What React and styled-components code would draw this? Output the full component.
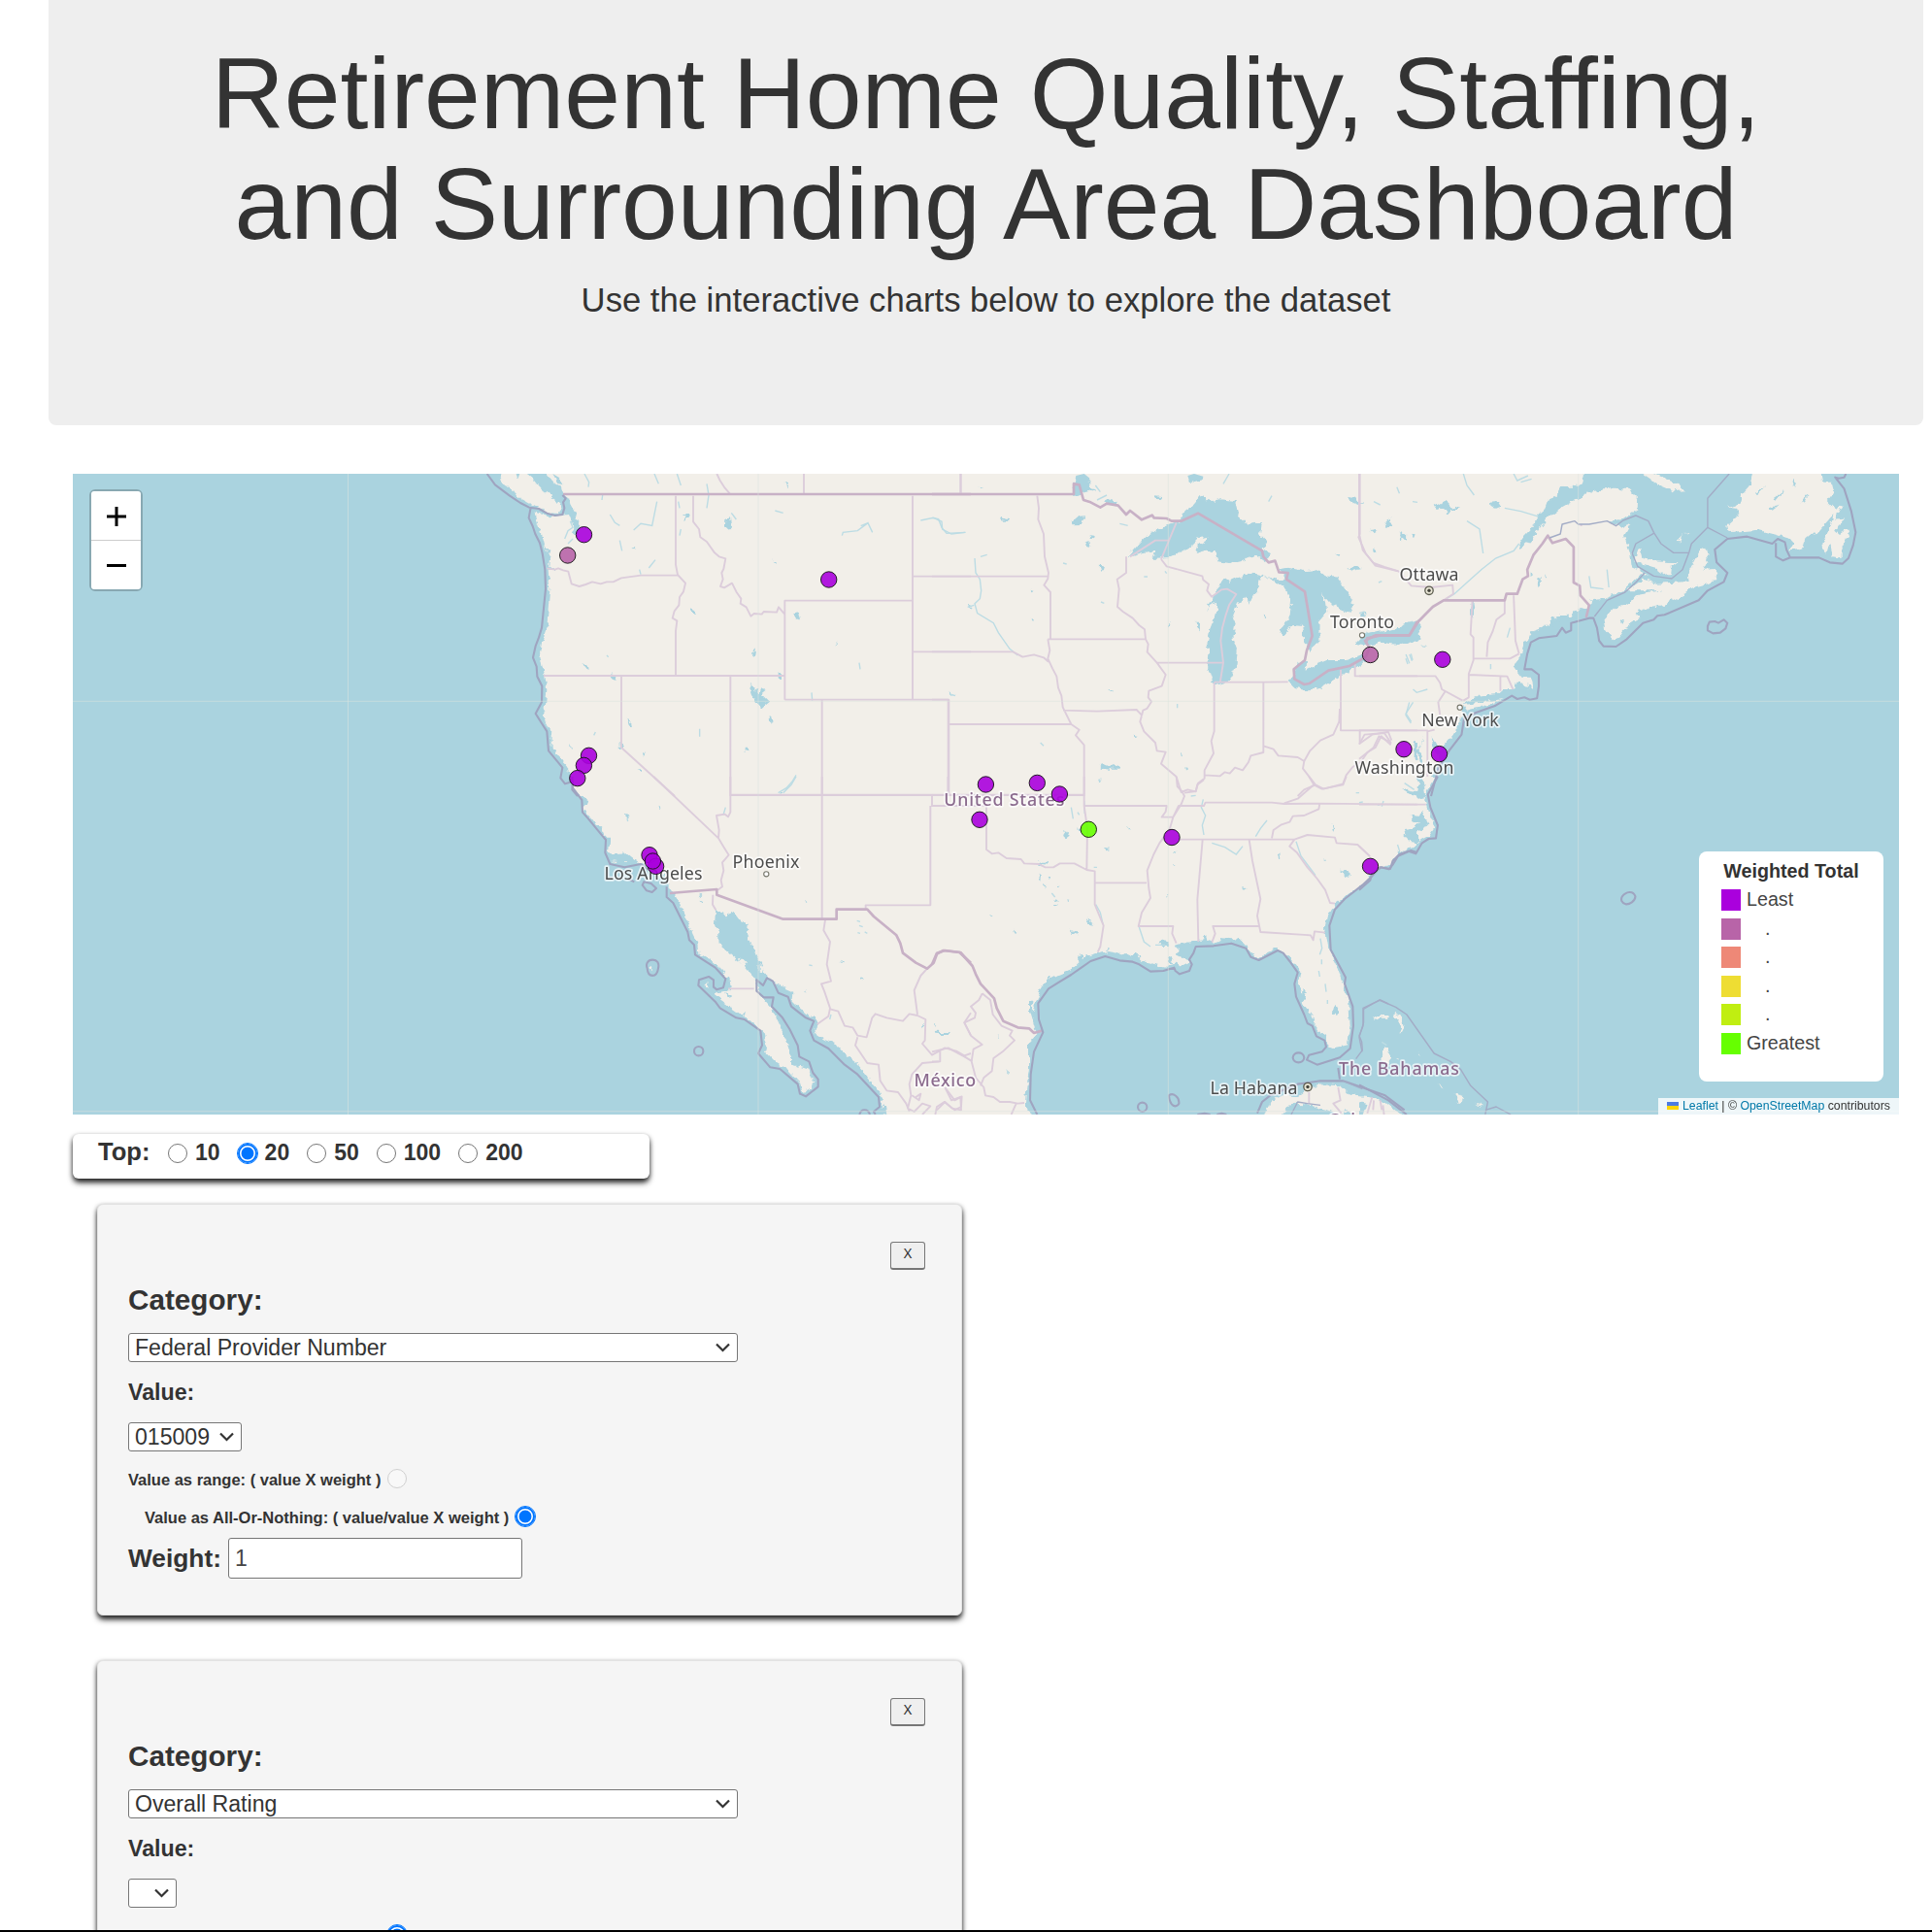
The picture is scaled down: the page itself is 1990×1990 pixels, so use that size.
import React from "react";
import styled, { createGlobalStyle, css } from "styled-components";

const GlobalStyle = createGlobalStyle`
  * { box-sizing: border-box; }
  body {
    margin: 0;
    background: #fff;
    color: #333;
    font-family: "Liberation Sans", Arial, Helvetica, sans-serif;
  }
`;

const Page = styled.div`
  height: 1990px;
  overflow: hidden;
  padding: 0 9px 0 50px;
  border-bottom: 2px solid #000;
`;

const Jumbotron = styled.header`
  height: 438px;
  padding-top: 39px;
  background: #eee;
  border-radius: 0 0 8px 8px;
  text-align: center;
`;

const Title = styled.h1`
  margin: 0;
  font-size: 103.9px;
  font-weight: 400;
  line-height: 114px;
`;

const Lead = styled.p`
  margin: 21px 0 0;
  font-size: 34.65px;
  line-height: 42px;
`;

const Main = styled.main`
  padding: 50px 25px 0 25px;
`;

const MapFrame = styled.section`
  position: relative;
  height: 660px;
  overflow: hidden;
  background: #aad3df;
`;

const MapDrawing = styled.svg`
  display: block;
  width: 100%;
  height: 100%;

  path { vector-effect: non-scaling-stroke; }
  .land { fill: #f2efe9; }
  .water { fill: #aad3df; }
  .river { fill: none; stroke: #bcdce4; stroke-width: 1.4; }
  .state { fill: none; stroke: #dccddb; stroke-width: 1.9; stroke-linejoin: round; }
  .nation { fill: none; stroke: #c8b1c6; stroke-width: 2.7; stroke-linejoin: round; }
  .sea { fill: none; stroke: #9fa4c0; stroke-width: 2.1; stroke-linejoin: round; }
  .seathin { fill: none; stroke: #a3acc6; stroke-width: 1.4; stroke-linejoin: round; }
`;

const PlaceName = styled.text`
  font-family: "Noto Sans", sans-serif;
  font-size: 17.8px;
  fill: ${(p) => (p.$country ? "#8b6b8e" : "#4c4c4c")};
  font-weight: ${(p) => (p.$country ? 500 : 400)};
  stroke: rgba(255, 255, 255, 0.7);
  stroke-width: 3.5px;
  stroke-linejoin: round;
  paint-order: stroke;
`;

const ZoomControl = styled.div`
  position: absolute;
  top: 16px;
  left: 17px;
  width: 55px;
  border: 2.5px solid rgba(0, 0, 0, 0.2);
  border-radius: 6px;
  background-clip: padding-box;
`;

const ZoomButton = styled.button`
  display: flex;
  align-items: center;
  justify-content: center;
  width: 100%;
  height: ${(p) => (p.$first ? 51 : 50)}px;
  padding: ${(p) => (p.$first ? "2px 0 0" : "0")};
  border: 0;
  background: #fff;
  border-radius: ${(p) => (p.$first ? "3px 3px 0 0" : "0 0 3px 3px")};
  ${(p) => p.$first && css`border-bottom: 1px solid #ccc;`}
`;

const Legend = styled.div`
  position: absolute;
  top: 389px;
  right: 16px;
  width: 190px;
  height: 237px;
  padding: 9px 23px 0;
  border-radius: 8px;
  background: #fff;
`;

const LegendTitle = styled.div`
  font-size: 19.7px;
  font-weight: 700;
  line-height: 23px;
  text-align: center;
  white-space: nowrap;
`;

const LegendRow = styled.div`
  display: flex;
  gap: 6px;
  height: 29.6px;
  padding-top: 7px;
  font-size: 19.7px;
  line-height: 21px;
  color: #444;
`;

const Swatch = styled.span`
  flex: none;
  width: 20px;
  height: 22px;
  background: ${(p) => p.$color};
`;

const LegendLabel = styled.span`
  padding-left: ${(p) => (p.$dot ? "19px" : "0")};
`;

const Attribution = styled.div`
  position: absolute;
  right: 0;
  bottom: 0;
  display: flex;
  align-items: center;
  width: 248px;
  height: 17px;
  padding: 0 0 1px 9px;
  background: rgba(255, 255, 255, 0.8);
  font-size: 12.3px;
  white-space: pre;

  svg { margin-right: 4px; }
  a { color: #0078a8; text-decoration: none; }
`;

const shadow = css`
  box-shadow: 0 5px 6px -1px rgba(0, 0, 0, 0.75), 0 2px 5px rgba(0, 0, 0, 0.55);
`;

const TopBar = styled.div`
  display: flex;
  width: 594px;
  height: 46px;
  margin-top: 20px;
  padding-left: 26px;
  border-radius: 6px;
  background: #fff;
  font-weight: 700;
  ${shadow}
`;

const TopLabel = styled.span`
  width: 72px;
  font-size: 25.6px;
  line-height: 37px;
`;

const TopOption = styled.label`
  display: flex;
  gap: 8px;
  height: 39px;
  align-items: center;
  margin-right: 18px;
  font-size: 23px;
  line-height: 36px;

  span { padding-bottom: 2px; }
`;

const Radio = styled.input.attrs({ type: "radio", readOnly: true })`
  appearance: none;
  flex: none;
  width: 20px;
  height: 20px;
  margin: 0;
  border: 1.5px solid #767676;
  border-radius: 50%;
  background: #fff;

  &:disabled {
    border-color: #d0d0d0;
    background: #f8f8f8;
  }

  &:checked {
    outline: 0.5px solid #0075ff;
    border: 2px solid #0075ff;
    background: radial-gradient(circle, #0075ff 6px, #fff 6.8px);
  }
`;

const Cards = styled.div`
  display: flex;
  flex-direction: column;
  gap: 46px;
  width: 891px;
  margin: 26px 0 0 25px;
`;

const Card = styled.section`
  flex: none;
  height: 424px;
  padding: 38px 37px 0 31px;
  border: 1px solid #e3e3e3;
  border-radius: 6px;
  background: #f5f5f5;
  ${shadow}
`;

const CloseButton = styled.button`
  display: block;
  width: 36px;
  height: 29px;
  margin-left: auto;
  padding: 0 0 5px;
  border: 1.5px solid #767676;
  border-bottom-width: 2px;
  border-radius: 3px;
  background: #efefef;
  color: #333;
  font: 14.5px "Noto Sans", sans-serif;
  line-height: 19px;
`;

const CategoryLabel = styled.div`
  margin-top: 14px;
  font-size: 29.7px;
  font-weight: 700;
  line-height: 34px;
`;

const ValueLabel = styled.div`
  margin-top: 17px;
  font-size: 23.2px;
  font-weight: 700;
  line-height: 28px;
`;

const SelectBox = styled.div`
  display: flex;
  align-items: center;
  justify-content: space-between;
  width: ${(p) => p.$width}px;
  height: 30px;
  margin-top: ${(p) => p.$top}px;
  padding: 0 7px 0 6px;
  border: 1.3px solid #767676;
  border-radius: 3px;
  background: #fff;
  font-size: 23.1px;
  line-height: 28px;
`;

const ModeRow = styled.label`
  display: flex;
  align-items: center;
  gap: 7px;
  height: 20px;
  margin: ${(p) => (p.$indent ? "19px 0 0 17px" : "18px 0 0")};
  font-size: 16.5px;
  font-weight: 700;

  span { padding-top: 3px; }
`;

const WeightRow = styled.label`
  display: flex;
  align-items: center;
  gap: 7px;
  margin-top: 12px;
  font-size: 26.3px;
  font-weight: 700;
`;

const WeightInput = styled.input`
  width: 303px;
  height: 42px;
  padding: 0 6px;
  border: 1.3px solid #767676;
  border-radius: 3px;
  background: #fff;
  color: #444;
  font: 23px "Liberation Sans", sans-serif;
`;

/* Each sheet of the map is digitised on its own grid and placed by its transform. */
const SHEETS = [
  {
    at: "translate(500 480) scale(.33333)",
    land: [
      "M190 24L205 48 232 62 240 85 258 98 262 118 280 150 292 185 285 215 272 205 270 180 258 150 240 152 200 156 155 140 160 178 172 210 182 250 198 290 194 320 199 380 194 440 190 500 176 540 168 580 175 620 184 650 190 690 186 740 175 770 192 800 206 830 206 870 232 905 256 935 262 960 272 975 275 1000 310 1030H1500V24Z",
      "M50 24L45 42 60 60 85 72 100 95 132 115 160 128 200 145 228 148 236 128 220 108 195 88 170 66 150 42 128 24Z",
    ],
    water: [
      "M820 672L830 690 845 700 850 688 866 692 852 704 876 728 850 750 838 730 822 708 814 684Z",
      "M742 165L756 160 760 185 750 197 740 190ZM612 146L632 150 628 165 612 170 620 158ZM388 640L403 645 400 660 390 658ZM436 782L450 792 454 810 442 800ZM412 852L426 858 424 876 414 874ZM952 460L964 450 972 472 956 468ZM878 770L888 780 880 798ZM302 606L316 616 320 630 306 622ZM905 640L915 645 912 660 905 655ZM800 872L812 872 810 882 800 880ZM822 580L834 568 830 588ZM470 940L482 940 478 950ZM488 888L497 892 492 900ZM452 250L463 250 460 257ZM636 442L646 446 642 456ZM258 862L270 872 262 876ZM925 50L936 56 930 64ZM888 286L900 300 896 304ZM1084 544L1092 548 1086 552ZM1490 430L1500 434 1494 440Z",
      "M186 250L200 258 196 270 204 280 192 292ZM190 310L212 310 210 320 192 320ZM240 950L262 955 270 985 262 975 245 970Z",
      "M95 24L100 40 106 24ZM208 24L228 36 240 58 226 55Z",
    ],
    river: "M245 225L255 200 270 190 262 170M255 240L270 225M522 24L535 55M592 24L604 60M684 55L690 90 684 130M306 24L320 50 318 65M458 198L480 178 515 184 530 110M385 150L400 175 415 184M600 130L596 110M600 215L604 195M1102 215L1105 205 1150 200 1182 176 1196 205M1182 176L1160 185M1345 168L1385 160 1410 172 1412 195 1440 210 1482 205M760 145L775 165M895 138L920 145M362 90L360 105M476 320L480 335M905 1010L930 995 948 975 960 955M1435 705L1452 710M1155 608L1158 628M662 812L662 836M375 585L380 590M1008 700L1010 725M415 230L422 262M505 315L525 290M340 822L335 832",
    nation: "M240 87H1500",
    state: "M588 92V305L594 336 618 362 612 388 600 405 598 430 584 448 578 470 592 478 588 510V648M190 316L215 320 225 316 240 322 256 326 266 364 290 372 310 366 330 358 356 364 375 358 395 358 420 346 480 338H594M642 92V172L660 195 664 220 684 234 708 268 722 280 742 286 736 318 730 330 734 350 726 372 738 376 762 362 776 390 790 410 788 425 806 436 820 464 830 456 854 458 860 450 900 452 906 436 924 457M925 722V416H1320M925 722H1430V1020M1320 92V722M180 648H925M420 648V870L585 1020M757 648V1020M757 1017H1500M1040 722V1020M1320 341H1500M1320 574H1500M1430 798H1500M715 24L725 45 740 68 755 85M984 24V85M1468 24V85",
    sea: "M5 24L30 58 75 92 108 114 135 128 165 132 190 146 215 153 238 150 244 130 240 112 248 100 238 90M140 128L134 160 146 186 154 210 168 238 176 270 184 320 186 380 180 440 174 500 165 530 155 556 147 592 158 620 160 650 175 680 174 730 155 765 172 792 190 820 195 880 220 910 238 932 232 964 246 982 270 975 268 1000 285 1020",
  },
  {
    at: "translate(960 480) scale(.33333)",
    land: ["M0 24H1500V1040H0Z"],
    water: [
      "M605 280L640 240 662 215 700 195 740 178 765 168 780 140 808 120 835 88 850 105 870 108 890 103 935 108 948 155 975 180 1020 174 1014 210 1035 235 1022 255 1048 268 1032 296 1000 274 960 290 918 300 885 295 872 265 850 260 815 270 828 238 858 218 825 222 805 242 775 262 735 282 680 285 690 262 650 268Z",
      "M845 452L866 410 880 380 905 346 920 356 955 340 985 328 1025 340 1012 356 1008 385 992 402 978 432 974 402 945 425 930 460 938 485 928 530 944 572 940 620 915 665 880 677 864 658 852 620 856 580 850 550 860 500 872 470 880 425 860 430Z",
      "M1025 340L1060 352 1095 350 1070 318 1100 314 1150 324 1195 322 1215 340 1252 344 1285 390 1305 430 1290 438 1296 456 1262 442 1230 424 1200 390 1218 420 1222 450 1196 480 1195 545 1165 572 1150 545 1144 495 1115 492 1085 525 1073 505 1105 470 1110 420 1092 380 1060 358Z",
      "M1100 665L1116 645 1130 605 1155 605 1154 632 1190 612 1220 600 1280 600 1330 582 1348 600 1300 628 1258 650 1200 686 1160 695 1120 686Z",
      "M438 60L445 30 470 24 490 40 485 65 508 70 485 78 462 84 450 96 434 88ZM790 30L810 24 838 32 836 46 812 52 795 46ZM434 172L452 155 475 154 462 170 458 180 436 181ZM515 308L534 310 530 324 520 326ZM470 235L488 232 490 248 476 246ZM485 214L500 216 498 226 488 224ZM815 482L826 482 824 508 816 500ZM210 158L238 166 236 172 212 168ZM1285 96L1305 98 1315 112 1334 112 1314 120 1290 110ZM1285 314L1310 306 1328 318 1305 323ZM545 96L550 105 575 110 570 125 535 110ZM692 94L712 96 710 103 692 102ZM1150 512L1160 500ZM1360 200L1375 198 1370 208ZM1442 205L1452 220 1448 234ZM1398 172L1410 170 1408 190ZM1246 270L1258 274 1254 280ZM540 688L562 693 556 698ZM52 700L74 706 60 710ZM1490 850L1500 850V905L1490 900ZM1320 455L1338 450 1340 468 1322 470Z",
      "M768 885L776 892 770 900ZM730 480L736 490 730 505ZM622 830L636 834 626 838ZM515 925L530 920 552 930 580 925 578 938 552 938 525 935ZM514 968L525 968 520 978ZM1022 463L1030 470 1024 472ZM146 62L155 65 148 68ZM306 380L318 384 310 388ZM308 470L315 476 310 482ZM784 934L792 936 786 944Z",
    ],
    river: "M0 160L20 164 30 190 45 208 104 205M132 285L135 330 148 350 152 385 148 410 132 425 140 455 190 485 205 515 240 565 265 585M110 436L130 430M150 280L170 274M505 60L520 80M900 55L918 24M1040 110L1050 92M580 178L605 184M510 105L540 90M335 855L345 865M720 325L725 332M655 342L666 342M405 300L416 303M522 420L532 424M1464 595L1470 612M1480 580L1485 600M1475 730L1464 770 1480 795M1490 1000L1460 980M1365 110L1385 120M1485 110L1500 112M1380 360L1390 356M758 735L758 748",
    nation: "M0 87H438V55L455 58 468 105 490 112 520 128 540 116 575 122 600 150 612 138 648 166 680 152 686 160 725 162 740 170H770L822 146 1020 262 1024 280 1040 298 1060 293 1072 328 1100 330 1095 350 1152 388 1175 525 1158 570 1152 600 1118 628 1120 658 1150 675 1166 672 1225 632 1290 618 1340 590 1352 562 1338 540 1370 523H1475L1500 480",
    state: "M89 24V85M325 92L330 130 328 165 345 210 348 280 360 330 358 348 346 368 366 390V535M0 341H360M0 574H250L280 590 315 583 345 592 360 605M358 535H660M358 535L364 570 358 595 372 625 385 650 390 685 400 710 404 745 430 798 455 815 444 832 470 862V1020M52 798H430M0 722H52V1015M0 1017H470M405 755L510 758 632 753 650 772M600 280V330L572 350 578 380 573 435 590 450 620 470 640 492 657 505 660 535 668 550 665 575 695 608 722 645 710 680 670 695 668 715 678 728 664 750 652 755 643 790 655 820 690 855 695 880 722 884 708 920 755 960 770 1008 790 1000 815 1006 822 980 842 965 842 940 870 888 863 850 872 820V668M695 608H897M872 668H1024L1100 667M1024 670V885L985 895 978 915 960 940 936 932 920 950 905 946 890 958 842 955M1024 865L1055 875 1070 895 1130 900 1150 912 1168 880 1200 848 1240 830 1258 790 1260 750M1150 912L1146 935 1185 985 1210 998 1270 982 1280 955 1300 930 1325 915 1345 885 1370 870 1388 835 1418 862M1185 985L1150 1000 1130 1020M1263 630V817H1500M1322 817V857L1360 830 1410 822 1420 848M1307 610V649H1500M708 288L725 310 780 325 835 340 838 352 855 365 850 385 864 404 895 382 912 380 940 396 918 430 908 460 897 500 892 540 900 608 890 670M612 280L690 230H732M755 175L708 288M1322 24V210L1318 220 1340 270 1370 308 1440 325",
  },
  {
    at: "translate(1400 480) scale(.37 .33333)",
    land: [
      "M0 24H624L620 48 600 65 560 66 545 95 525 105 515 135 500 150 482 190 460 215 445 240 450 255 478 232 500 195 525 162 560 130 610 98 650 78 710 68 750 72 776 98 775 135 735 165 690 170 728 190 755 180 738 215 755 270 758 310 800 330 770 350 735 385 680 408 645 412 640 440 610 435 590 465 545 465 520 495 500 505 480 512 470 540 458 545 450 590 430 620 450 650 478 650 484 682 460 690 455 672 440 662 425 690 400 690 385 705 330 710 300 728 285 745 290 765 280 790 262 830 238 860 224 878 210 850 202 835 205 870 218 890 222 915 210 940 195 970 178 1040H0Z",
      "M290 738L330 732 400 720 370 735 300 755Z",
      "M745 385L790 350 830 362 905 358 918 350 915 330 935 290 950 258 965 250 972 290 958 320 990 318 998 335 980 360 930 375 900 400 845 430 800 440 775 450 782 470 745 495 725 530 708 535 685 510 680 475 715 435 750 425 770 400 845 385Z",
      "M775 262L785 254 790 285 815 295 888 298 870 312 868 332 850 336 830 318 790 305 766 290Z",
      "M1095 24L1085 65 1065 90 1058 118 1030 128 1052 132 1060 148 1025 182 1028 204 1110 198 1160 212 1200 225 1210 240 1195 262 1228 258 1245 225 1272 200 1268 215 1300 175 1320 150 1312 190 1290 240 1296 272 1312 240 1318 280 1345 285 1345 240 1365 205 1362 190 1335 210 1325 200 1348 160 1325 165 1345 120 1322 132 1302 108 1322 80 1315 50 1290 50 1285 24Z",
      "M790 24L830 55 880 78 906 76 895 60 850 38 818 24Z",
      "M888 235L894 220 900 210 896 234ZM906 208L920 203 916 208Z",
    ],
    water: [
      "M-13 552L5 530 20 518 70 510 112 500 125 485 175 472 165 500 172 530 135 552 90 550 60 545 20 556Z",
      "M310 425L320 415 322 440 314 470 308 455ZM365 110L385 108 394 125 380 132 366 122ZM210 125L240 105 255 125 280 135 255 135 245 150 235 130 215 135ZM495 350L504 345 506 370 498 378ZM725 475L738 478 730 485ZM112 205L130 208 130 230 116 220ZM145 210L158 210 155 228ZM172 558L190 556 182 560ZM480 325L486 335 480 338ZM514 338L520 340 516 344ZM180 830L170 860 160 880 174 920 178 900 166 880 172 850ZM30 200L48 200 38 208ZM85 160L90 185 75 188ZM35 255L48 262 38 270Z",
      "M455 675L475 678 480 690 468 686 462 700 450 695ZM540 465L548 480 542 495 535 475ZM575 455L584 470 578 485ZM560 458L564 480 556 490Z",
      "M1100 80L1135 60 1105 88ZM1150 100L1185 72 1160 104ZM1210 40L1215 70 1206 55ZM1140 130L1170 122 1150 140ZM1230 110L1250 90 1240 118Z",
    ],
    river: "M445 240L430 262 380 285 340 320 300 360 265 395 240 412M405 130L450 140 495 155M300 170L335 195 345 270M290 24L300 60 320 90M430 24L440 45 470 30M450 50L480 40M0 455L15 450M130 582L140 610M140 582L147 602M366 612L366 628M640 340L645 375 680 380M690 320L695 375M150 690L160 700 190 690M150 730L130 765 145 790M412 530L420 500M105 65L112 85",
    nation: "M20 545L22 532 60 523H140L165 480 205 435 235 415H405L410 395 440 395 455 350 470 340 468 320 485 275 510 240 525 215 538 238 575 225 597 250V360L614 370 616 400 640 430 632 468",
    state: "M0 24V210L10 260 40 300 70 312 110 325 145 370 200 375 260 368 262 395 235 415M315 418L310 520 318 530V600L305 642V715L290 725M405 415L405 455 382 475 372 510 358 545 355 590M430 400L435 540 445 580M318 595H420L445 580M305 645L412 650 428 690M393 650V695M0 649H212L225 670 230 690 288 725M240 695L220 730 225 770M0 817H190V960M190 820L210 815M0 860L15 830 70 825 88 855 55 835 40 870 0 905M618 180V186",
    sea: "M200 1020L212 970 222 930 250 880 285 830 292 780 325 762 380 740 425 710 440 720 460 715 475 722 495 718 500 680 500 645 480 628 460 628 468 580 478 545 500 532 550 525 565 500 575 515 590 508 590 485 640 470H652L662 500 668 540 680 557 715 558 745 535 790 485 820 475 830 463 850 460 945 415 970 385 1015 358 1025 330 995 298 990 258 1025 225 1080 218 1150 240 1165 225 1185 235 1190 260 1200 283 1280 283 1310 298 1345 302 1362 285 1375 245 1382 205 1370 140 1350 70 1325 35 1335 38 1350 35 1355 24M1160 238L1160 280 1180 292 1200 283M970 495L975 482 990 480 1000 485 1015 475 1025 485 1020 502 1005 515 985 517 970 508Z",
    seathin: "M1030 24L970 100V190L1025 222M970 190L925 240 918 268H875L840 240 820 205 805 170 770 153 735 168 715 185 690 170 640 180 610 180 600 170 565 180 560 210 530 222M820 208L770 240 760 270 775 310 820 340 870 348 900 320 918 268M795 330L770 360 740 390 690 415 655 465",
  },
  {
    at: "translate(500 800) scale(.33333)",
    land: [
      "M270 0L272 30 296 50 298 62 318 62 314 82 300 95 335 140 368 170 370 185 384 185 378 230 390 238 435 235 470 262 520 290 556 308 568 340 582 360 602 395 612 420 625 445 640 485 655 515 658 545 690 562 730 595 752 625 755 660 705 670 740 700 790 735 840 770 865 795 866 850 900 885 940 910 972 945 980 974 995 972 1015 945 1000 905 968 895 945 860 928 810 900 750 880 710 850 675 832 620 790 575 758 548 722 515 720 480 708 450 712 410 745 430 765 420 780 440 812 455 810 485 828 530 848 575 862 605 900 642 952 665 950 695 1000 740 1015 738 1026 760 1018 790 1050 812 1080 825 1100 850 1150 888 1190 940 1220 975 1230 1044H1500V0Z",
      "M683 632L690 640 692 655 684 650ZM512 582L520 584 518 598 512 592ZM390 262L410 264 405 268ZM420 262L445 262 430 266Z",
      "M785 558L802 575 808 590 792 584ZM845 582L858 590 855 604 845 602Z",
    ],
    water: [
      "M955 862L968 870 965 895 945 890 945 868Z",
      "M428 116L446 120 440 128ZM530 92L542 96 536 102ZM1388 788L1432 790 1430 795 1390 793ZM658 362L668 366 662 370ZM664 380L676 384 670 388ZM988 384L996 386 990 390ZM905 48L920 50 908 56ZM798 725L806 735 800 745ZM740 670L762 674 752 680ZM990 656L994 668 988 664ZM1102 566L1110 572 1104 576ZM1160 618L1170 622 1162 626ZM1390 760L1396 765 1390 770ZM1350 765L1358 770 1352 775ZM1228 684L1242 688Z",
      "M1224 1040L1235 1010 1240 1044Z",
    ],
    river: "M735 118L742 95M438 128L440 138M920 50L945 25 960 0M1148 445L1158 448M1155 460L1166 464M1150 482L1158 484M1172 480L1180 484M1000 582L1010 584M1068 735L1064 750",
    nation: "M570 360L640 354 715 348V365L920 440H1085V410H1180L1200 432 1240 465 1270 490 1282 515 1290 545 1330 575 1365 593 1385 575 1395 548 1415 537 1465 543 1500 575",
    state: "M520 0L720 190 722 165 714 120 740 116 750 124 757 110V0M720 190L735 215 752 242 732 265 736 290 728 320 732 340 718 350M757 56H1380V90H1425M1040 0V440M1375 90V397H1175V410M1430 0V56M703 365L702 395 712 412M1050 442L1045 475 1065 510 1055 580 1068 632 1038 640 1048 665 1065 715 1060 740 1025 765M1065 718L1090 725 1110 770 1135 775 1150 800 1178 805 1195 745 1205 733 1240 745 1290 755 1310 733 1335 738 1360 750 1358 815 1350 825 1380 860 1420 838 1455 848 1480 862 1500 855M1335 735L1325 660 1345 615 1365 593M1150 805L1143 830 1180 885 1215 890 1220 940 1240 970 1275 975 1300 1010 1310 1035M750 655H830M1405 850V880L1350 885 1318 920 1310 950 1315 985 1305 1025 1325 1035 1350 1010 1375 1018 1350 1044M1318 985L1340 1000 1345 980 1330 990M1390 1044L1395 1020 1418 1005 1450 1030 1470 1020 1472 988 1450 1000 1420 960M1500 730L1480 760 1500 800",
    sea: "M268 0L270 35 298 72 300 110 318 130 355 175 372 195 370 235 385 270 430 280 480 270 520 300M485 335L490 325 512 330 528 345 515 357 498 352ZM440 315L460 325M560 340V372L580 390 600 430 625 480 630 505 645 520 648 550 710 590 742 625 735 652 715 658 705 650 705 628 690 618 660 628 658 645 710 695 725 715 775 745 800 750 850 785 855 830 843 855 880 898 910 903 965 950 972 980 990 988 1028 958 1028 935 1012 915 1000 880 970 865 965 830 940 780 918 745 885 710 890 682 860 682 838 662 838 628 858 645 870 622 888 632 905 668 935 680 945 710 990 745 1015 755 1003 785 1015 815 1060 840 1110 890 1150 920 1215 990 1218 1020 1200 1035 1205 1044M517 566C500 566 495 580 500 592C502 622 530 622 534 592C538 575 530 566 517 566ZM645 848a14 14 0 1 0 28 0a14 14 0 1 0 -28 0M1156 1044C1160 1025 1182 1025 1188 1044",
  },
  {
    at: "translate(960 800) scale(.33333)",
    land: [
      "M0 0H1500V210L1470 222 1440 235 1418 272 1380 282 1355 300 1340 330 1290 360 1250 390 1225 425 1215 470 1225 530 1250 585 1270 640 1288 700 1292 770 1280 830 1240 838 1222 830 1218 800 1190 780 1175 740 1145 700 1155 665 1140 670 1130 645 1138 600 1105 560 1070 528 1025 548 1005 560 980 535 950 500 900 502 870 512 840 505 800 510 755 518 748 530 765 530 755 550 785 565 800 570 770 585 755 575 725 588 700 582 650 570 600 550 545 540 500 548 465 560 430 595 390 612 355 630 335 660 320 700 305 730 320 780 325 795 300 822 300 900 290 980 288 1010 305 1044H0Z",
      "M1030 1044L1045 1000 1090 985 1130 988 1160 965 1200 952 1260 955 1290 985 1350 990 1400 1005 1430 1030 1450 1044H1300L1280 1030 1260 1044 1220 1030 1150 1012 1110 1010 1080 1044Z",
      "M1398 838L1405 838 1418 870 1400 882 1390 878ZM1365 745L1375 738 1410 738 1412 745 1385 745 1372 752ZM1430 732L1452 750 1458 770 1450 790 1445 760ZM1438 870L1446 872 1444 878Z",
    ],
    water: [
      "M700 514L715 505 735 508 730 525 712 524ZM1238 712L1250 708 1258 722 1248 738 1236 728ZM838 490L846 485 850 508 838 510ZM890 495L945 500 945 512 895 510ZM452 548L466 545 462 575 450 565ZM300 700L310 690 308 735 300 725ZM355 615L365 612 362 640 352 635ZM608 548L630 545 640 560 655 575 640 580 620 565ZM725 560L740 555 748 578 738 580ZM540 528L545 530 542 542ZM1455 190L1480 165 1500 150V205L1470 200 1490 190ZM1475 120L1500 122 1492 130 1500 138 1485 140ZM430 470L442 475 448 488 436 485ZM475 435L490 448 502 458 485 455ZM405 162L418 170 425 182 415 190ZM450 165L460 160 458 172ZM330 262L345 270 360 262 358 275 332 272ZM1258 285L1275 292 1295 300 1290 312 1272 300ZM1205 257L1225 257 1212 261ZM232 905L240 904 238 920 232 918ZM8 789L55 790 45 795 10 794Z",
      "M372 396L388 398 375 404ZM382 374L390 382 384 384ZM418 380L424 388 420 390ZM530 218L550 222 538 226ZM596 154L616 158 605 160ZM740 232L758 230 748 236ZM744 270L755 272 748 276ZM726 362L734 368 728 374ZM958 342L968 346 960 350ZM1235 148L1244 156 1240 168ZM1065 245L1078 238 1070 250ZM180 424L188 428 182 430ZM330 300L336 305 334 320 328 312ZM345 330L352 335 348 345ZM358 305L366 312 362 318ZM390 335L396 340 390 345ZM252 470L262 476 256 482ZM204 800L210 804 206 808Z",
      "M1145 655L1158 665 1148 675 1155 690 1142 685Z",
    ],
    river: "M838 70L832 95 845 120 835 150 840 180M865 205L905 218 940 240 960 215M1125 200L1140 245 1170 285 1185 305M1200 500L1205 530 1198 550M1204 565L1204 580M1195 600L1198 618M1215 640L1218 665M1222 690L1222 702M1000 185L1015 160 1035 135M370 360L380 372M640 465L655 510 675 525M506 395L520 420 528 455M515 8L520 16M800 60L815 58M1310 50L1320 50M1395 75L1390 92M470 75L472 115M430 95L436 130M450 110L455 118M500 280L510 280M720 520L690 520M1390 820L1405 830",
    nation: "M0 580L15 545 40 537 88 543 125 585 135 610 150 640 192 685 200 715 220 755 265 775 300 778 315 792 340 785",
    state: "M0 56H470M470 0V90H725L722 108 710 125H745L762 90H840L845 80 1050 80 1088 84 1195 83 1500 86M470 90L480 160 478 288 503 292V395L530 460 520 525 512 542M0 90H168V225L185 238 205 235 230 252 275 255 285 268 330 270 350 280 375 280 395 268 440 268 478 288M503 328H663M755 0L758 30 772 45 780 60 770 85 745 125 735 160 725 175 703 205 685 240 665 290 670 345 675 375 648 420 638 462H745L742 485 755 515M780 50L815 45 820 25 840 10M760 194H1120L1105 215 1128 235 1160 280 1190 315 1215 350 1230 390 1245 392M836 195L820 380 823 510M980 195L990 260 1015 378 1005 430 1015 480 1170 490 1178 505 1182 478 1215 482M865 512L875 485 868 462H1010M1120 194L1160 180 1245 188 1250 205 1315 210 1352 245M1050 190L1055 165 1080 148 1105 140 1115 122 1150 120 1195 100 1198 83M1088 82L1130 68 1180 25 1165 0M1180 25L1205 38 1270 25 1280 0M50 0V56M155 670L145 690 120 710 135 730 132 745 100 760 120 800 155 828 128 842 122 880 135 930 160 960 165 985 190 990 210 1005 240 1005 265 1010 285 1008M155 670L180 690 188 735 215 770 248 785 240 800 255 815 218 850 190 870 185 910 160 930 150 955M0 850L50 838 100 865 125 880M0 880L22 880M40 960L60 1000 88 990 90 1030 62 1025 40 1005 15 1030M260 1010L245 1044M1165 975V1010M1255 960L1262 1000 1240 1010 1265 1040M1360 990L1345 1040M1385 1000L1390 1030",
    sea: "M1500 235L1480 228 1440 245 1425 270 1412 286 1385 280 1357 310 1330 335 1275 378 1245 410 1228 460 1232 535 1278 620 1275 640 1300 710 1302 770 1292 840 1260 868 1190 890 1158 875 1165 860 1205 850 1218 835 1213 815 1188 802 1175 770 1160 762 1150 735 1125 680 1120 640 1130 605 1105 570 1085 545 1068 537 1010 567 985 557 970 530 925 515 870 523 815 525 808 545 795 565 803 580 795 600 765 610 752 600 748 590 715 600 675 602 640 580 620 572 580 568 535 555 490 570 430 612 360 655 328 700 330 750 343 790 315 850 305 920 303 1000 325 1044M1005 1040L1020 1005 1045 985 1130 950 1200 940 1270 940 1400 985 1460 1030M1260 935L1255 900M1115 868C1117 848 1148 848 1150 868C1148 888 1117 888 1115 868ZM636 1021a14 14 0 1 0 28 0a14 14 0 1 0 -28 0M732 985C745 975 765 990 763 1010C755 1025 735 1020 732 985ZM820 1044L842 1040 860 1044M880 1044L895 1040 910 1044",
    seathin: "M1310 872L1330 845 1328 820 1320 800 1332 770V715L1385 690 1410 702M1110 1044L1130 1005 1160 1010 1200 1015M1270 940L1330 965",
  },
  {
    at: "translate(1400 800) scale(.37628 .33333)",
    land: [
      "M0 0H210L190 40 178 70 188 105 208 155 190 185 150 210 110 222 85 268 55 275 30 302 0 335Z",
      "M0 990L20 990 60 1010 90 1044H0Z",
      "M70 834L78 838 90 870 74 890 62 870ZM38 745L58 738 82 740 80 746 55 746 42 752ZM98 728L118 745 124 770 114 792 110 760 95 742ZM160 850L168 862 164 862ZM262 982L284 990 280 1002 266 1012 272 995ZM320 1008L340 1012 332 1016ZM200 905L206 918 202 916ZM215 940L230 965 224 960Z",
    ],
    water: [
      "M110 30L140 42 160 45 165 20 155 0 170 0 178 30 182 60 160 65 135 50ZM140 120L165 122 170 105 180 130 188 145 178 160 158 170 150 185 165 190 145 198 130 192 122 165 140 162 165 145 145 135Z",
      "M0 1005L20 1010 10 1044H0Z",
    ],
    river: "M0 80L10 78M50 88L60 85M105 210L110 228",
    state: "M0 86H183M0 215L30 247M40 1000L38 1030M65 1015L68 1044",
    sea: "M215 0L205 20 188 55 195 95 215 150 210 190 190 192 172 205 155 238 135 230 110 240 92 260 85 285 60 280 35 300 30 320 0 350M720 370C730 355 750 350 756 370C755 385 740 395 730 394C718 390 715 380 720 370ZM0 952L80 1000 130 1044",
    seathin: "M8 850L0 805 12 760V718L55 690 100 712 130 735 205 855 250 880 278 905 305 955 352 1005 345 1044M345 1030L375 1020 415 1044",
  },
];

const MARKERS = [
  [601.5, 550.7], [584.7, 572, "#b864a8"], [853.7, 597], [606.5, 778.3], [601.4, 788.4],
  [594.8, 801.6], [669, 880.7], [675.6, 892.3], [672.4, 887], [1015.4, 808], [1068.3, 806.4],
  [1091.4, 818], [1009, 844.3], [1121.3, 854.3, "#6f0"], [1207, 862.5], [1411.5, 892.3],
  [1411.5, 674.5, "#b864a8"], [1485.8, 679.3], [1446, 771.7], [1482.5, 776.6],
];

const PLACES = [
  ["Ottawa", 1441.5, 597.7, 61], ["Toronto", 1370, 647.3, 66], ["New York", 1464.3, 747.7, 79.5],
  ["Washington", 1395.5, 796.7, 102], ["Los Angeles", 622.5, 906.2, 101], ["Phoenix", 754.5, 893.5, 69],
  ["La Habana", 1246.5, 1127.2, 90], ["United States", 972.3, 829.7, 124, true],
  ["México", 941.5, 1118.7, 63.5, true], ["The Bahamas", 1379, 1106.8, 124, true],
  ["Cuba", 1368, 1160, 45, true],
];

const TOWNS = [[1403, 654.3], [1503.7, 728.7], [789.3, 900.3]];
const CAPITALS = [[1472, 608.3], [1347, 1119.5]];

const LINES = ["river", "state", "nation", "sea", "seathin"];

function Terrain() {
  return (
    <>
      {SHEETS.map((s) => (
        <g key={s.at} transform={s.at}>
          {s.land.map((d) => <path key={d} className="land" d={d} />)}
        </g>
      ))}
      {SHEETS.map((s) => (
        <g key={s.at} transform={s.at}>
          {s.water.map((d) => <path key={d} className="water" d={d} />)}
        </g>
      ))}
    </>
  );
}

function UsMap() {
  return (
    <MapDrawing viewBox="75 488 1881 660" preserveAspectRatio="none">
      <defs>
        <filter id="shore" filterUnits="userSpaceOnUse" x="75" y="488" width="1881" height="660" colorInterpolationFilters="sRGB">
          <feTurbulence type="fractalNoise" baseFrequency=".16" numOctaves="2" seed="4" />
          <feDisplacementMap in="SourceGraphic" scale="7" xChannelSelector="R" yChannelSelector="G" />
        </filter>
        <clipPath id="rim"><path d="M75 488H1956V492H75ZM75 1144H1956V1148H75Z" /></clipPath>
      </defs>
      <g filter="url(#shore)"><Terrain /></g>
      <g clipPath="url(#rim)"><Terrain /></g>
      {SHEETS.map((s) => (
        <g key={s.at} transform={s.at}>
          {LINES.map((k) => s[k] && <path key={k} className={k} d={s[k]} />)}
        </g>
      ))}
      <path d="M358.5 488V1148M781 488V1148M1203.3 488V1148M1625.7 488V1148M75 722.3H1956M75 1144.7H1956" stroke="#dde3de" strokeOpacity=".55" fill="none" />
      {TOWNS.map(([x, y]) => (
        <circle key={x} cx={x} cy={y} r="2.6" fill="#fff" stroke="#77776c" strokeWidth="1.1" />
      ))}
      {CAPITALS.map(([x, y]) => (
        <g key={x}>
          <circle cx={x} cy={y} r="4.2" fill="#e8e5d4" stroke="#5c5c50" strokeWidth="1.3" />
          <circle cx={x} cy={y} r="1.7" fill="#44443c" />
        </g>
      ))}
      {PLACES.map(([name, x, y, w, country]) => (
        <PlaceName key={name} x={x} y={y} textLength={w} $country={country}>{name}</PlaceName>
      ))}
      {MARKERS.map(([x, y, color = "#a0d"]) => (
        <circle key={x + "-" + y} cx={x} cy={y} r="8.2" fill={color} fillOpacity=".9" stroke="#111" strokeWidth=".9" />
      ))}
    </MapDrawing>
  );
}

const LEGEND = [
  ["#a0d", "Least"], ["#b864a8", "."], ["#ee8877", "."],
  ["#eedd33", "."], ["#c0ee11", "."], ["#66ff00", "Greatest"],
];

function Chevron() {
  return (
    <svg width="15" height="10" viewBox="0 0 15 10" fill="none" stroke="#333" strokeWidth="2.2">
      <path d="M1 1.5L7.5 8 14 1.5" />
    </svg>
  );
}

function FilterCard({ category, value, valueWidth, range, name }) {
  return (
    <Card>
      <CloseButton>X</CloseButton>
      <CategoryLabel>Category:</CategoryLabel>
      <SelectBox $width={628} $top={17}><span>{category}</span><Chevron /></SelectBox>
      <ValueLabel>Value:</ValueLabel>
      <SelectBox $width={valueWidth} $top={17}><span>{value}</span><Chevron /></SelectBox>
      <ModeRow>
        <span>Value as range: ( value X weight )</span>
        <Radio name={name} defaultChecked={range} disabled={!range} />
      </ModeRow>
      <ModeRow $indent>
        <span>Value as All-Or-Nothing: ( value/value X weight )</span>
        <Radio name={name} defaultChecked={!range} />
      </ModeRow>
      <WeightRow>
        Weight:
        <WeightInput defaultValue="1" />
      </WeightRow>
    </Card>
  );
}

export default function App() {
  return (
    <>
      <GlobalStyle />
      <Page>
        <Jumbotron>
          <Title>Retirement Home Quality, Staffing,<br />and Surrounding Area Dashboard</Title>
          <Lead>Use the interactive charts below to explore the dataset</Lead>
        </Jumbotron>
        <Main>
          <MapFrame>
            <UsMap />
            <ZoomControl>
              <ZoomButton $first aria-label="Zoom in">
                <svg width="20" height="20" stroke="#000" strokeWidth="3"><path d="M0 10H20M10 0V20" /></svg>
              </ZoomButton>
              <ZoomButton aria-label="Zoom out">
                <svg width="20" height="20" stroke="#000" strokeWidth="3"><path d="M0 10.5H20" /></svg>
              </ZoomButton>
            </ZoomControl>
            <Legend>
              <LegendTitle>Weighted Total</LegendTitle>
              {LEGEND.map(([color, label]) => (
                <LegendRow key={color}>
                  <Swatch $color={color} />
                  <LegendLabel $dot={label === "."}>{label}</LegendLabel>
                </LegendRow>
              ))}
            </Legend>
            <Attribution>
              <svg width="12" height="8"><path fill="#4C7BE1" d="M0 0h12v4H0z" /><path fill="#FFD500" d="M0 4h12v4H0z" /></svg>
              <a>Leaflet</a>{" | © "}<a>OpenStreetMap</a>{" contributors"}
            </Attribution>
          </MapFrame>
          <TopBar>
            <TopLabel>Top:</TopLabel>
            {["10", "20", "50", "100", "200"].map((n) => (
              <TopOption key={n}>
                <Radio name="top" defaultChecked={n === "20"} />
                <span>{n}</span>
              </TopOption>
            ))}
          </TopBar>
          <Cards>
            <FilterCard name="mode-0" category="Federal Provider Number" value="015009" valueWidth={117} />
            <FilterCard name="mode-1" category="Overall Rating" value="" valueWidth={50} range />
          </Cards>
        </Main>
      </Page>
    </>
  );
}
